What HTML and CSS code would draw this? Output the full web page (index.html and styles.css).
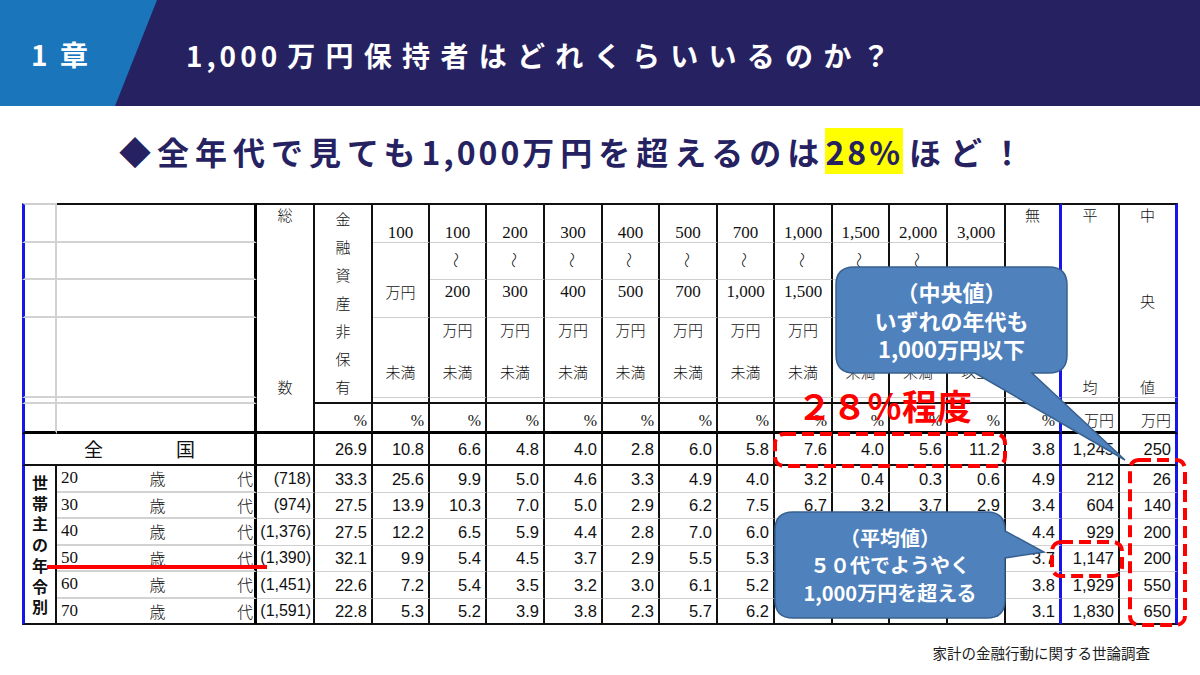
FILE: index.html
```html
<!DOCTYPE html>
<html lang="ja">
<head>
<meta charset="utf-8">
<title>1,000万円保持者はどれくらいいるのか？</title>
<link rel="stylesheet" href="styles.css">
</head>
<body>
<div class="slide">
  <header class="topbar">
    <div class="chapter">1 章</div>
    <h1 class="title"><span class="tnum">1,000</span>万円保持者はどれくらいいるのか？</h1>
  </header>
  <div class="lead"><p>◆全年代で見ても<span class="lnum">1,000</span>万円を超えるのは<span class="hl">28%</span><span class="tail">ほど！</span></p></div>

  <div class="tbl-wrap">
    <table class="grid">
      <colgroup>
        <col class="w35"><col class="w200">
        <col class="w58"><col class="w58"><col class="w57"><col class="w57"><col class="w58"><col class="w58"><col class="w57"><col class="w58"><col class="w57"><col class="w58"><col class="w57"><col class="w58"><col class="w58"><col class="w56"><col class="w58"><col class="w58">
      </colgroup>
      <tbody>
        <tr class="r1">
          <td class="ca gtop"></td>
          <td class="cb gtop"></td>
          <td class="top vcell sou" rowspan="6"><div class="vstack"><span>総</span><span>数</span></div></td>
          <td class="top vcell kin" rowspan="5"><div class="kstack">金<br>融<br>資<br>産<br>非<br>保<br>有</div></td>
          <td class="top hn b">100</td>
          <td class="top hn b">100</td>
          <td class="top hn b">200</td>
          <td class="top hn b">300</td>
          <td class="top hn b">400</td>
          <td class="top hn b">500</td>
          <td class="top hn b">700</td>
          <td class="top hn b">1,000</td>
          <td class="top hn b">1,500</td>
          <td class="top hn b">2,000</td>
          <td class="top hn b">3,000</td>
          <td class="top vcell cmu" rowspan="4"><div class="vstack"><span>無</span><span>回</span><span>答</span></div></td>
          <td class="top vcell chei" rowspan="4"><div class="vstack"><span>平</span><span>均</span></div></td>
          <td class="top vcell cchu" rowspan="4"><div class="vstack"><span>中</span><span>央</span><span>値</span></div></td>
        </tr>
        <tr class="r2">
          <td class="ca"></td>
          <td class="cb"></td>
          <td class="hn nb"></td>
          <td class="hn"><span class="wave">〜</span></td>
          <td class="hn"><span class="wave">〜</span></td>
          <td class="hn"><span class="wave">〜</span></td>
          <td class="hn"><span class="wave">〜</span></td>
          <td class="hn"><span class="wave">〜</span></td>
          <td class="hn"><span class="wave">〜</span></td>
          <td class="hn"><span class="wave">〜</span></td>
          <td class="hn"><span class="wave">〜</span></td>
          <td class="hn"><span class="wave">〜</span></td>
          <td class="hn nb"></td>
        </tr>
        <tr class="r3">
          <td class="ca"></td>
          <td class="cb"></td>
          <td class="hn t"><span class="jp">万円</span></td>
          <td class="hn t">200</td>
          <td class="hn t">300</td>
          <td class="hn t">400</td>
          <td class="hn t">500</td>
          <td class="hn t">700</td>
          <td class="hn t">1,000</td>
          <td class="hn t">1,500</td>
          <td class="hn t">2,000</td>
          <td class="hn t">3,000</td>
          <td class="hn t"><span class="jp">万円</span></td>
        </tr>
        <tr class="r4">
          <td class="ca"></td>
          <td class="cb"></td>
          <td class="hn t"><div class="l1"></div><div class="l2 jp">未満</div></td>
          <td class="hn t"><div class="l1 jp">万円</div><div class="l2 jp">未満</div></td>
          <td class="hn t"><div class="l1 jp">万円</div><div class="l2 jp">未満</div></td>
          <td class="hn t"><div class="l1 jp">万円</div><div class="l2 jp">未満</div></td>
          <td class="hn t"><div class="l1 jp">万円</div><div class="l2 jp">未満</div></td>
          <td class="hn t"><div class="l1 jp">万円</div><div class="l2 jp">未満</div></td>
          <td class="hn t"><div class="l1 jp">万円</div><div class="l2 jp">未満</div></td>
          <td class="hn t"><div class="l1 jp">万円</div><div class="l2 jp">未満</div></td>
          <td class="hn t"><div class="l1 jp">万円</div><div class="l2 jp">未満</div></td>
          <td class="hn t"><div class="l1 jp">万円</div><div class="l2 jp">未満</div></td>
          <td class="hn t"><div class="l1"></div><div class="l2 jp">以上</div></td>
        </tr>
        <tr class="r5">
          <td class="ca"></td>
          <td class="cb"></td>
          <td class="thin"></td><td class="thin"></td><td class="thin"></td><td class="thin"></td><td class="thin"></td><td class="thin"></td><td class="thin"></td><td class="thin"></td><td class="thin"></td><td class="thin"></td><td class="thin"></td>
          <td class="thin cmu"></td><td class="thin chei"></td><td class="thin cchu"></td>
        </tr>
        <tr class="r6">
          <td class="ca"></td>
          <td class="cb"></td>
          <td class="unit">%</td>
          <td class="unit">%</td><td class="unit">%</td><td class="unit">%</td><td class="unit">%</td><td class="unit">%</td><td class="unit">%</td><td class="unit">%</td><td class="unit">%</td><td class="unit">%</td><td class="unit">%</td><td class="unit">%</td>
          <td class="unit cmu">%</td>
          <td class="unit chei"><span class="jp">万円</span></td>
          <td class="unit cchu"><span class="jp">万円</span></td>
        </tr>
        <tr class="zen">
          <td class="ca zlabel" colspan="2"><div class="zentext"><span>全</span><span>国</span></div></td>
          <td></td>
          <td>26.9</td><td>10.8</td><td>6.6</td><td>4.8</td><td>4.0</td><td>2.8</td><td>6.0</td><td>5.8</td><td>7.6</td><td>4.0</td><td>5.6</td><td>11.2</td>
          <td class="cmu">3.8</td><td class="chei">1,245</td><td class="cchu">250</td>
        </tr>
        <tr class="d">
          <td class="ca side" rowspan="6"><div class="sidetext">世<br>帯<br>主<br>の<br>年<br>令<br>別</div></td>
          <td class="cb age-cell"><div class="age"><span>20</span><span>歳</span><span>代</span></div></td>
          <td class="sz">(718)</td>
          <td>33.3</td><td>25.6</td><td>9.9</td><td>5.0</td><td>4.6</td><td>3.3</td><td>4.9</td><td>4.0</td><td>3.2</td><td>0.4</td><td>0.3</td><td>0.6</td>
          <td class="cmu">4.9</td><td class="chei">212</td><td class="cchu">26</td>
        </tr>
        <tr class="d">
          <td class="cb age-cell"><div class="age"><span>30</span><span>歳</span><span>代</span></div></td>
          <td class="sz">(974)</td>
          <td>27.5</td><td>13.9</td><td>10.3</td><td>7.0</td><td>5.0</td><td>2.9</td><td>6.2</td><td>7.5</td><td>6.7</td><td>3.2</td><td>3.7</td><td>2.9</td>
          <td class="cmu">3.4</td><td class="chei">604</td><td class="cchu">140</td>
        </tr>
        <tr class="d">
          <td class="cb age-cell"><div class="age"><span>40</span><span>歳</span><span>代</span></div></td>
          <td class="sz">(1,376)</td>
          <td>27.5</td><td>12.2</td><td>6.5</td><td>5.9</td><td>4.4</td><td>2.8</td><td>7.0</td><td>6.0</td><td>9.5</td><td>4.5</td><td>4.6</td><td>6.6</td>
          <td class="cmu">4.4</td><td class="chei">929</td><td class="cchu">200</td>
        </tr>
        <tr class="d">
          <td class="cb age-cell"><div class="age"><span>50</span><span>歳</span><span>代</span></div></td>
          <td class="sz">(1,390)</td>
          <td>32.1</td><td>9.9</td><td>5.4</td><td>4.5</td><td>3.7</td><td>2.9</td><td>5.5</td><td>5.3</td><td>10.5</td><td>5.5</td><td>6.0</td><td>9.5</td>
          <td class="cmu">3.7</td><td class="chei">1,147</td><td class="cchu">200</td>
        </tr>
        <tr class="d">
          <td class="cb age-cell"><div class="age"><span>60</span><span>歳</span><span>代</span></div></td>
          <td class="sz">(1,451)</td>
          <td>22.6</td><td>7.2</td><td>5.4</td><td>3.5</td><td>3.2</td><td>3.0</td><td>6.1</td><td>5.2</td><td>9.5</td><td>6.6</td><td>7.5</td><td>14.5</td>
          <td class="cmu">3.8</td><td class="chei">1,929</td><td class="cchu">550</td>
        </tr>
        <tr class="d last">
          <td class="cb age-cell"><div class="age"><span>70</span><span>歳</span><span>代</span></div></td>
          <td class="sz">(1,591)</td>
          <td>22.8</td><td>5.3</td><td>5.2</td><td>3.9</td><td>3.8</td><td>2.3</td><td>5.7</td><td>6.2</td><td>8.9</td><td>6.9</td><td>8.6</td><td>16.8</td>
          <td class="cmu">3.1</td><td class="chei">1,830</td><td class="cchu">650</td>
        </tr>
      </tbody>
    </table>
  </div>

  <p class="source">家計の金融行動に関する世論調査</p>

  <svg class="overlay" width="1200" height="675" viewBox="0 0 1200 675">
    <line x1="47" y1="567" x2="267" y2="567" stroke="#ff0000" stroke-width="4"/>
    <rect x="775" y="434" width="230" height="32" rx="9" fill="none" stroke="#ff0000" stroke-width="4" stroke-dasharray="12 6"/>
    <rect x="1130" y="460" width="55" height="165" rx="9" fill="none" stroke="#ff0000" stroke-width="4" stroke-dasharray="12 6"/>
    <rect x="1052" y="542" width="70" height="34" rx="9" fill="none" stroke="#ff0000" stroke-width="4" stroke-dasharray="12 6"/>
    <path d="M 854 267 H 1049 Q 1067 267 1067 285 V 355 Q 1067 373 1049 373 H 1032 L 1125 460 L 975 373 H 854 Q 836 373 836 355 V 285 Q 836 267 854 267 Z" fill="#4f81bd" stroke="#37608f" stroke-width="1.5"/>
    <path d="M 793 512 H 987 Q 1005 512 1005 530 V 531 L 1044 552 L 1005 558 V 600 Q 1005 618 987 618 H 793 Q 775 618 775 600 V 530 Q 775 512 793 512 Z" fill="#4f81bd" stroke="#37608f" stroke-width="1.5"/>
  </svg>

  <div class="pct28">２８％程度</div>
  <div class="callout co1"><span>（中央値）</span><span>いずれの年代も</span><span>1,000万円以下</span></div>
  <div class="callout co2"><span>（平均値）</span><span>５０代でようやく</span><span>1,000万円を超える</span></div>
</div>
</body>
</html>
```

FILE: styles.css
```css
* { box-sizing: border-box; }
html, body { margin: 0; padding: 0; }
body {
  width: 1200px;
  height: 675px;
  overflow: hidden;
  background: #ffffff;
  font-family: "Noto Sans CJK JP", "Noto Sans", sans-serif;
}
.slide { position: relative; width: 1200px; height: 675px; }

/* top bar */
.topbar {
  height: 106px;
  background: #262262;
  display: flex;
  align-items: center;
}
.chapter {
  align-self: stretch;
  width: 157px;
  background: #1b75bb;
  clip-path: polygon(0 0, 157px 0, 115px 106px, 0 106px);
  color: #fff;
  font-weight: 700;
  font-size: 28px;
  letter-spacing: 3px;
  padding-left: 31px;
  padding-top: 2px;
  display: flex;
  align-items: center;
}
.title {
  margin: 0 0 0 29px;
  padding-top: 3px;
  color: #fff;
  font-size: 28px;
  font-weight: 700;
  letter-spacing: 10.3px;
  line-height: 1;
}
.tnum { letter-spacing: 4px; margin-right: 6px; }

/* lead line */
.lead {
  height: 97px;
  display: flex;
  align-items: center;
  padding: 0 0 8px 119px;
}
.lead p {
  margin: 0;
  font-size: 32px;
  font-weight: 700;
  color: #262262;
  letter-spacing: 6px;
  line-height: 46px;
}
.lnum { letter-spacing: 3px; }
.hl { background: #ffff00; letter-spacing: 3px; }
.tail { margin-left: 6px; letter-spacing: 9px; }

/* table */
.tbl-wrap { padding-left: 22px; }
.grid {
  border-collapse: separate;
  border-spacing: 0;
  table-layout: fixed;
  width: 1156px;
}
.w35 { width: 35px; } .w200 { width: 200px; } .w56 { width: 56px; }
.w57 { width: 57px; } .w58 { width: 58px; }

.grid td {
  padding: 0 4px 0 0;
  border-right: 2px solid #111;
  border-bottom: 1px solid #cfcfcf;
  font-family: "Liberation Sans", "Noto Sans CJK JP", sans-serif;
  font-size: 16.5px;
  line-height: 20px;
  color: #111;
  text-align: right;
  vertical-align: middle;
  white-space: nowrap;
  overflow: hidden;
}
.grid td.ca {
  border-left: 3px solid #1616e8;
  border-right: 2px solid #d2d2d2;
  border-bottom: 2px solid #d2d2d2;
}
.grid td.cb {
  border-right: 3px solid #000;
  border-bottom: 2px solid #d2d2d2;
}
.grid td.top { border-top: 2px solid #111; }
.grid td.gtop { border-top: 2px solid #cfcfcf; }
.grid td.cb.gtop { border-top: 2px solid #111; }
.grid td.cmu { border-right: 3px solid #1616e8; }
.grid td.cchu { border-right: 3px solid #1616e8; }

.r1 { height: 40px; }
.r2 { height: 37px; }
.r3 { height: 38px; }
.r4 { height: 80px; }
.r5 { height: 6px; }
.r6 { height: 30px; }
.zen { height: 32px; }
.d { height: 26.5px; }

/* header cells */
.grid td.hn {
  padding: 0;
  text-align: center;
  font-family: "Liberation Serif", "Noto Sans CJK JP", serif;
  font-size: 17px;
  line-height: 18px;
}
.grid td.hn.b { vertical-align: bottom; }
.grid td.hn.t { vertical-align: top; padding-top: 3px; }
.grid td.hn.nb { border-bottom: none; }
.jp {
  font-family: "Noto Sans CJK JP", sans-serif;
  font-size: 15px;
  font-weight: 300;
}
.l1 { height: 18px; line-height: 18px; }
.l2 { line-height: 18px; margin-top: 24px; }
.wave {
  display: inline-block;
  transform: rotate(90deg);
  font-family: "Noto Sans CJK JP", sans-serif;
  font-size: 16px;
  font-weight: 300;
}
.grid td.thin { border-bottom: 2px solid #111; }
.grid tr.r5 td.ca, .grid tr.r5 td.cb { border-bottom: 2px solid #d2d2d2; }

.grid td.vcell {
  padding: 0;
  vertical-align: top;
  text-align: center;
  font-family: "Noto Sans CJK JP", sans-serif;
  font-size: 15px;
  font-weight: 300;
}
.grid td.sou { border-bottom: 3px solid #000; }
.grid td.kin { border-bottom: 2px solid #111; }
.vstack {
  height: 192px;
  display: flex;
  flex-direction: column;
  justify-content: space-between;
  align-items: center;
  line-height: 20px;
}
.kstack { line-height: 28px; }

.grid tr.r6 td { border-bottom: 3px solid #000; }
.grid td.unit {
  vertical-align: bottom;
  padding-bottom: 1px;
  font-family: "Liberation Serif", "Noto Sans CJK JP", serif;
  font-size: 16px;
  line-height: 18px;
}

/* 全国 row */
.grid tr.zen td { border-bottom: 2px solid #111; }
.grid td.zlabel { border-right: 3px solid #000; padding: 0; }
.zentext {
  display: flex;
  justify-content: center;
  gap: 73px;
  font-family: "Noto Sans CJK JP", sans-serif;
  font-size: 19px;
  line-height: 24px;
}

/* data rows */
.grid td.side {
  padding: 0;
  text-align: center;
  border-right: 2px solid #111;
  border-bottom: 2px solid #111;
}
.sidetext {
  font-family: "Noto Sans CJK JP", sans-serif;
  font-weight: 700;
  font-size: 16px;
  line-height: 20.8px;
}
.grid td.age-cell { padding: 0 1px 0 4px; }
.age {
  display: flex;
  justify-content: space-between;
  font-family: "Liberation Serif", "Noto Sans CJK JP", serif;
  font-size: 17px;
  line-height: 20px;
}
.age span:nth-child(2), .age span:nth-child(3) {
  font-family: "Noto Sans CJK JP", sans-serif;
  font-size: 16px;
  font-weight: 300;
}
.grid td.sz { padding-right: 2px; font-size: 16px; }
.grid tr.last td { border-bottom: 2px solid #111; }

/* source */
.source {
  margin: 18px 0 0 0;
  padding-right: 50px;
  text-align: right;
  font-size: 14.5px;
  line-height: 20px;
  color: #1a1a1a;
}

/* overlays */
.overlay { position: absolute; left: 0; top: 0; }
.pct28 {
  position: absolute;
  left: 797px;
  top: 383px;
  color: #ff0000;
  font-size: 35px;
  font-weight: 700;
  line-height: 44px;
}
.callout {
  position: absolute;
  display: flex;
  flex-direction: column;
  justify-content: center;
  align-items: center;
  color: #fff;
  font-weight: 700;
  text-align: center;
}
.co1 {
  left: 836px; top: 267px; width: 231px; height: 106px;
  font-size: 22px; line-height: 28.5px;
}
.co2 {
  left: 775px; top: 512px; width: 230px; height: 106px;
  font-size: 20px; line-height: 27.5px;
}
```
